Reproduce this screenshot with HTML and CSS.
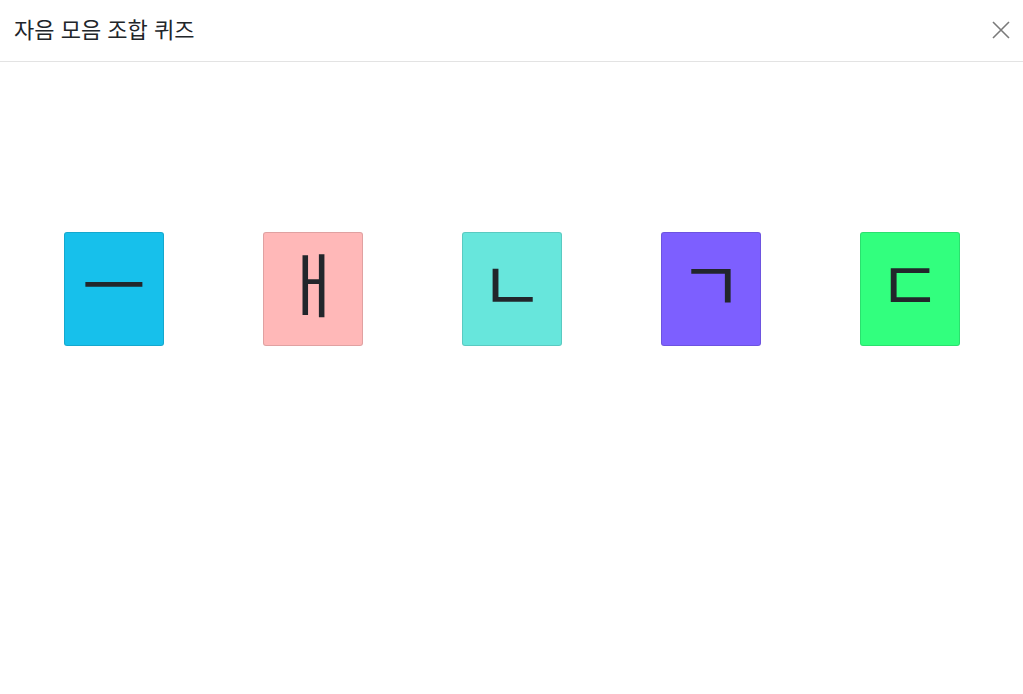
FILE: index.html
```html
<!DOCTYPE html>
<html lang="ko">
<head>
<meta charset="utf-8">
<title>자음 모음 조합 퀴즈</title>
<link rel="stylesheet" href="styles.css">
</head>
<body>
<div class="modal">
  <header class="modal-header">
    <h5 class="modal-title">자음 모음 조합 퀴즈</h5>
    <button class="close" aria-label="닫기">
      <svg width="18" height="18" viewBox="0 0 18 18"><path d="M1 1L17 17M17 1L1 17" stroke="#7a7a7a" stroke-width="1.6" fill="none"/></svg>
    </button>
  </header>
  <main class="modal-body">
    <div class="tiles">
      <div class="tile c1">ㅡ</div>
      <div class="tile c2">ㅐ</div>
      <div class="tile c3">ㄴ</div>
      <div class="tile c4">ㄱ</div>
      <div class="tile c5">ㄷ</div>
    </div>
  </main>
</div>
</body>
</html>
```

FILE: styles.css
```css
* { box-sizing: border-box; }
html, body { margin: 0; padding: 0; background: #fff; }
body {
  font-family: "Noto Sans CJK KR", "Noto Sans", sans-serif;
  color: #212529;
}
.modal { width: 1023px; height: 694px; }
.modal-header {
  display: flex;
  align-items: center;
  justify-content: space-between;
  height: 62px;
  padding: 0 13px 0 14px;
  border-bottom: 1px solid #e3e3e3;
}
.modal-title {
  margin: 0;
  font-size: 22px;
  font-weight: 400;
  line-height: 1;
  padding-bottom: 5px;
}
.close {
  border: 0;
  background: none;
  padding: 0;
  margin-bottom: 2px;
  width: 18px;
  height: 18px;
  display: flex;
}
.modal-body { padding: 170px 0 0 0; }
.tiles {
  display: flex;
  gap: 99px;
  padding-left: 64px;
}
.tile {
  width: 100px;
  height: 114px;
  border-radius: 3px;
  border: 1px solid rgba(0,0,0,0.12);
  display: flex;
  align-items: center;
  justify-content: center;
  padding-bottom: 14px;
  font-size: 70px;
  line-height: 1;
  color: #22262b;
}
.c1 { background: #17c0eb; }
.c2 { background: #ffb8b8; }
.c3 { background: #67e6dc; }
.c4 { background: #7d5fff; }
.c5 { background: #32ff7e; }
```
